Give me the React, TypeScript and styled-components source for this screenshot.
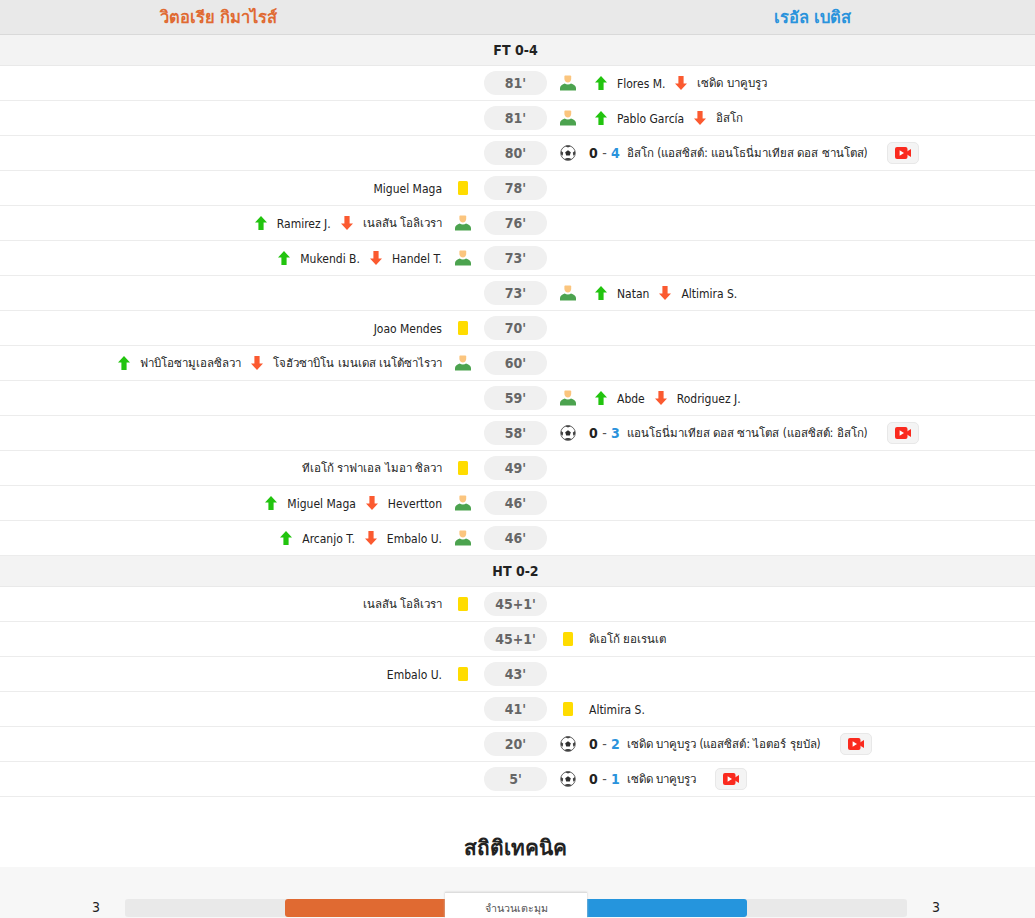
import React from "react";
import styled, { createGlobalStyle } from "styled-components";

const Global = createGlobalStyle`
  html, body { margin: 0; padding: 0; background: #fff; }
  body { font-family: "DejaVu Sans Condensed", "DejaVu Sans", sans-serif; font-stretch: condensed; font-size: 12px; color: #222; overflow: hidden; height: 918px; }
`;

const Page = styled.div`
  width: 1035px;
  height: 918px;
  overflow: hidden;
`;
const Header = styled.div`
  display: grid;
  grid-template-columns: 437px 157px 437px 4px;
  height: 34px;
  background: #e9e9e9;
  border-bottom: 1px solid #d9d9d9;
  align-items: center;
`;
const TeamName = styled.div<{ $c: string }>`
  text-align: center;
  font-size: 16.5px;
  font-weight: 700;
  color: ${(p) => p.$c};
`;
const Period = styled.div`
  height: 30px;
  background: #f3f3f3;
  border-bottom: 1px solid #e9e9e9;
  padding-right: 4px;
  display: flex;
  align-items: center;
  justify-content: center;
  font-size: 14px;
  font-weight: 700;
  color: #222;
`;
const Row = styled.div`
  height: 34px;
  border-bottom: 1px solid #ececec;
  display: grid;
  grid-template-columns: 484px 63px 1fr;
  align-items: center;
`;
const Pill = styled.div`
  height: 24px;
  border-radius: 12px;
  background: #f0f0f0;
  display: flex;
  align-items: center;
  justify-content: center;
  font-size: 14px;
  font-weight: 700;
  color: #666;
`;
const Side = styled.div<{ $left?: boolean }>`
  display: flex;
  align-items: center;
  flex-direction: ${(p) => (p.$left ? "row-reverse" : "row")};
  min-width: 0;
`;
const IconSlot = styled.span`
  width: 42px;
  display: flex;
  align-items: center;
  justify-content: center;
  flex: none;
`;
const Content = styled.div`
  display: flex;
  align-items: center;
  white-space: nowrap;
`;
const Name = styled.span<{ $thai?: boolean }>`
  font-size: ${(p) => (p.$thai ? "11.5px" : "12px")};
  padding-top: ${(p) => (p.$thai ? "0" : "1px")};
  color: #222;
`;
const Arrow = styled.span<{ $first?: boolean; $right?: boolean }>`
  display: flex;
  margin: 0 10px;
  margin-left: ${(p) => (p.$first && p.$right ? "6px" : "10px")};
`;
const Score = styled.span`
  font-size: 14px;
  font-weight: 700;
  color: #222;
  margin-right: 7px;
  white-space: pre;
`;
const Dash = styled.span`
  font-weight: 400;
  color: #555;
`;
const Away = styled.span`
  color: #2a93dc;
`;
const VideoBtn = styled.span`
  width: 30px;
  height: 20px;
  border: 1px solid #e8e8e8;
  border-radius: 5px;
  background: #f4f4f4;
  margin-left: 19px;
  display: flex;
  align-items: center;
  justify-content: center;
`;
const Card = styled.span`
  display: block;
  width: 10px;
  height: 14px;
  background: #ffdc00;
  border-radius: 1.5px;
`;
const StatTitle = styled.div`
  height: 70px;
  padding-top: 36px;
  box-sizing: border-box;
  padding-right: 4px;
  text-align: center;
  font-size: 20.8px;
  line-height: 30px;
  font-weight: 700;
  color: #222;
`;
const Stats = styled.div`
  height: 51px;
  background: #f7f7f7;
  display: grid;
  grid-template-columns: 125px 782px 1fr;
  padding-top: 32px;
  box-sizing: border-box;
`;
const StatNum = styled.div<{ $right?: boolean }>`
  font-size: 14px;
  line-height: 16px;
  text-align: ${(p) => (p.$right ? "left" : "right")};
  padding: ${(p) => (p.$right ? "0 0 0 25px" : "0 25px 0 0")};
  color: #222;
`;
const Track = styled.div`
  position: relative;
  height: 18px;
  border-radius: 3px;
  background: #e9e9e9;
  display: flex;
  justify-content: center;
`;
const Fill = styled.div<{ $c: string; $left?: boolean }>`
  width: 231px;
  height: 18px;
  background: ${(p) => p.$c};
  border-radius: ${(p) => (p.$left ? "3px 0 0 3px" : "0 3px 3px 0")};
`;
const Tab = styled.div`
  position: absolute;
  left: 320px;
  top: -7px;
  width: 142px;
  height: 26px;
  box-sizing: border-box;
  background: #fff;
  border-top: 1px solid #ddd;
  box-shadow: 0 0 2px #ccc;
  text-align: center;
  font-size: 10.7px;
  line-height: 32px;
  color: #555;
`;

const Person = () => (
  <svg width="16" height="16" viewBox="0 0 16 16">
    <path d="M4.8 0.5h5.4a1 1 0 0 1 1 1v2.6c0 1.9-1.5 3.4-3.3 3.4s-3.5-1.5-3.5-3.4V1.5z" fill="#fbc57e" />
    <path d="M0 15.5v-2.6c0-2 2.4-3.8 4.8-4.4.8.7 1.8 1 3.1 1s2.3-.3 3.1-1c2.5.6 5 2.4 5 4.4v2.6z" fill="#4ca34f" />
  </svg>
);
const Ball = () => (
  <svg width="16" height="16" viewBox="0 0 16 16">
    <circle cx="8" cy="8" r="7.3" fill="#fff" stroke="#666" strokeWidth="1" />
    <path d="M8 5.2l2.8 2-1 3.2H6.2l-1-3.2z" fill="#2e2e2e" />
    <path d="M5.2 1.2L8 2.4l2.8-1.2-1-.6H6.2zM1 6l2.2 1.6-.5 3.2L1 9.4zM15 6l-2.2 1.6.5 3.2L15 9.4zM4.4 14l2.4-1h2.4l2.4 1-1.4 1.3H5.8z" fill="#444" />
  </svg>
);
const Up = () => (
  <svg width="12" height="14" viewBox="0 0 12 14">
    <path d="M6 0l6 6.6H8.6V14H3.4V6.6H0z" fill="#22c40f" />
  </svg>
);
const Down = () => (
  <svg width="12" height="14" viewBox="0 0 12 14">
    <path d="M6 14L0 7.4h3.4V0h5.2v7.4H12z" fill="#fb5a30" />
  </svg>
);
const Video = () => (
  <svg width="16" height="12" viewBox="0 0 16 12">
    <rect x="0" y="0" width="12.5" height="12" rx="2" fill="#fa2a1e" />
    <path d="M12 4.5L16 2v8l-4-2.5z" fill="#fa2a1e" />
    <path d="M4.6 3.2L9 6l-4.4 2.8z" fill="#fff" />
  </svg>
);

type Ev = {
  t: string;
  left?: boolean;
  kind?: "sub" | "card" | "goal";
  a?: string;
  b?: string;
  score?: number;
  video?: boolean;
};

const top: Ev[] = [
  { t: "81'", kind: "sub", a: "Flores M.", b: "เซดิด บาคูบรูว" },
  { t: "81'", kind: "sub", a: "Pablo García", b: "อิสโก" },
  { t: "80'", kind: "goal", score: 4, a: "อิสโก (แอสซิสต์: แอนโธนี่มาเทียส ดอส ซานโตส)", video: true },
  { t: "78'", left: true, kind: "card", a: "Miguel Maga" },
  { t: "76'", left: true, kind: "sub", a: "Ramirez J.", b: "เนลสัน โอลิเวรา" },
  { t: "73'", left: true, kind: "sub", a: "Mukendi B.", b: "Handel T." },
  { t: "73'", kind: "sub", a: "Natan", b: "Altimira S." },
  { t: "70'", left: true, kind: "card", a: "Joao Mendes" },
  { t: "60'", left: true, kind: "sub", a: "ฟาบิโอซามูเอลซิลวา", b: "โจฮัวซาบิโน เมนเดส เนโต้ซาไรวา" },
  { t: "59'", kind: "sub", a: "Abde", b: "Rodriguez J." },
  { t: "58'", kind: "goal", score: 3, a: "แอนโธนี่มาเทียส ดอส ซานโตส (แอสซิสต์: อิสโก)", video: true },
  { t: "49'", left: true, kind: "card", a: "ทีเอโก้ ราฟาเอล ไมอา ซิลวา" },
  { t: "46'", left: true, kind: "sub", a: "Miguel Maga", b: "Hevertton" },
  { t: "46'", left: true, kind: "sub", a: "Arcanjo T.", b: "Embalo U." },
];
const bottom: Ev[] = [
  { t: "45+1'", left: true, kind: "card", a: "เนลสัน โอลิเวรา" },
  { t: "45+1'", kind: "card", a: "ดิเอโก้ ยอเรนเต" },
  { t: "43'", left: true, kind: "card", a: "Embalo U." },
  { t: "41'", kind: "card", a: "Altimira S." },
  { t: "20'", kind: "goal", score: 2, a: "เซดิด บาคูบรูว (แอสซิสต์: ไอตอร์ รุยบัล)", video: true },
  { t: "5'", kind: "goal", score: 1, a: "เซดิด บาคูบรูว", video: true },
];

const isThai = (s?: string) => /[\u0E00-\u0E7F]/.test(s ?? "");
const Label = ({ s }: { s?: string }) => <Name $thai={isThai(s)}>{s}</Name>;

const Body = ({ e }: { e: Ev }) => {
  if (e.kind === "sub")
    return (
      <Content>
        <Arrow $first $right={!e.left}><Up /></Arrow>
        <Label s={e.a} />
        <Arrow><Down /></Arrow>
        <Label s={e.b} />
      </Content>
    );
  if (e.kind === "goal")
    return (
      <Content>
        <Score>0 <Dash>-</Dash> <Away>{e.score}</Away></Score>
        <Label s={e.a} />
        {e.video && <VideoBtn><Video /></VideoBtn>}
      </Content>
    );
  return <Content><Label s={e.a} /></Content>;
};

const EventRow = ({ e }: { e: Ev }) => {
  const icon = e.kind === "sub" ? <Person /> : e.kind === "goal" ? <Ball /> : <Card />;
  const side = (
    <>
      <IconSlot>{icon}</IconSlot>
      <Body e={e} />
    </>
  );
  return (
    <Row>
      <Side $left>{e.left && side}</Side>
      <Pill>{e.t}</Pill>
      <Side>{!e.left && side}</Side>
    </Row>
  );
};

export default function App() {
  return (
    <Page>
      <Global />
      <Header>
        <TeamName $c="#e06a32">วิตอเรีย กิมาไรส์</TeamName>
        <span />
        <TeamName $c="#2a93dc">เรอัล เบติส</TeamName>
      </Header>
      <Period>FT 0-4</Period>
      {top.map((e, i) => <EventRow key={i} e={e} />)}
      <Period>HT 0-2</Period>
      {bottom.map((e, i) => <EventRow key={i} e={e} />)}
      <StatTitle>สถิติเทคนิค</StatTitle>
      <Stats>
        <StatNum>3</StatNum>
        <Track>
          <Fill $c="#e06a32" $left />
          <Fill $c="#2595dd" />
          <Tab>จำนวนเตะมุม</Tab>
        </Track>
        <StatNum $right>3</StatNum>
      </Stats>
    </Page>
  );
}
